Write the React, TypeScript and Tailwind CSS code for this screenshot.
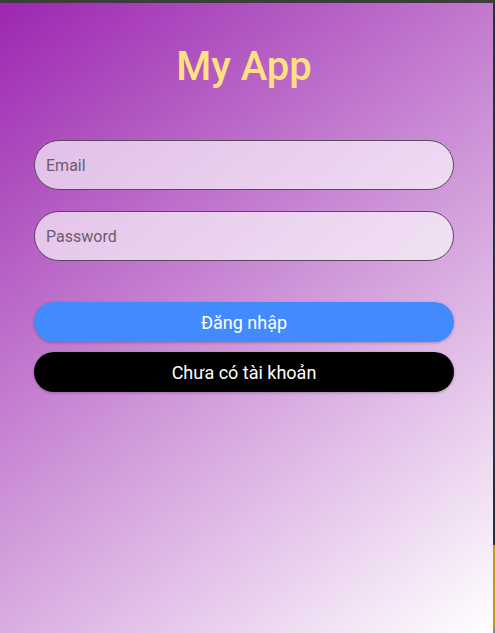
export default function App() {
  return (
    <div className="w-[495px] h-[633px] flex flex-col bg-[#3c3c3c] font-['Roboto',sans-serif] overflow-hidden">
      {/* window top edge */}
      <div className="h-[3px] bg-[#3d3d3d] shrink-0" />
      <div className="flex flex-1">
        <div className="flex-1 bg-[linear-gradient(142deg,#9c27b0,#ffffff)] pl-[34px]">
          <h1 className="mt-[40px] w-[420px] text-center text-[40px] leading-[48px] font-medium text-[#ffe082]">
            My App
          </h1>

          <div className="mt-[49px] w-[420px] flex flex-col gap-[21px]">
            <input
              placeholder="Email"
              className="h-[50px] w-full rounded-full border border-[#584a5b] bg-white/[0.65] px-[11px] text-[16px] text-[#3d2f40] placeholder:text-[#6a5c6e] outline-none"
            />
            <input
              placeholder="Password"
              className="h-[50px] w-full rounded-full border border-[#584a5b] bg-white/[0.65] px-[11px] text-[16px] text-[#3d2f40] placeholder:text-[#6a5c6e] outline-none"
            />
          </div>

          <div className="mt-[41px] w-[420px] flex flex-col gap-[10px]">
            <button className="h-[40px] w-full rounded-full bg-[#448aff] text-[18px] text-white shadow-[0_1px_3px_rgba(0,0,0,0.25)]">
              Đăng nhập
            </button>
            <button className="h-[40px] w-full rounded-full bg-black text-[18px] text-white shadow-[0_1px_3px_rgba(0,0,0,0.25)]">
              Chưa có tài khoản
            </button>
          </div>
        </div>

        {/* window right edge */}
        <div className="w-[2px] flex flex-col bg-[#2e2e36]">
          <div className="h-[542px]" />
          <div className="h-[83px] bg-[#c39a1a]" />
          <div className="flex-1 bg-[#8a8a8a]" />
        </div>
      </div>
    </div>
  );
}
